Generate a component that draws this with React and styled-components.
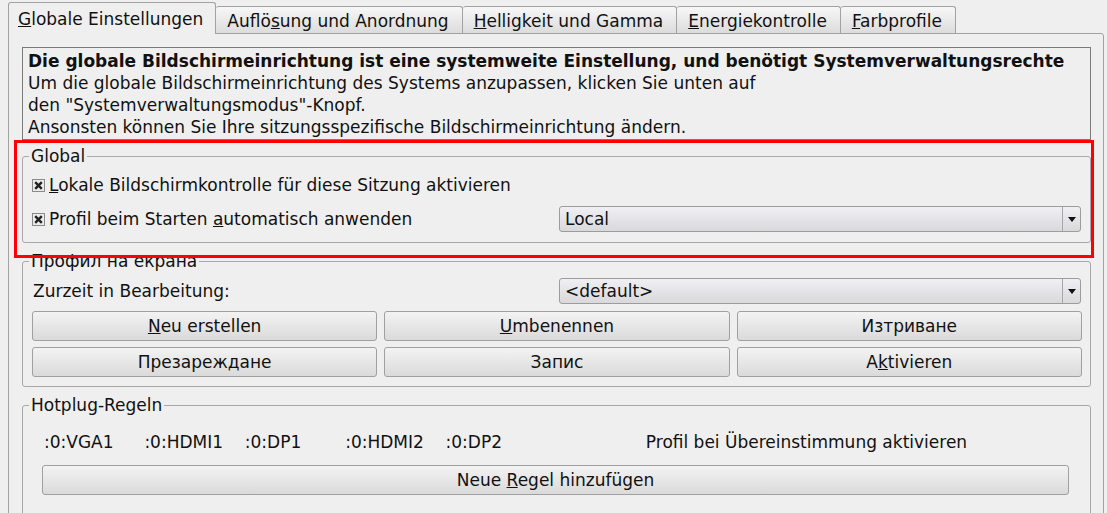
import React from "react"
import styled, { createGlobalStyle } from "styled-components"

const GlobalStyle = createGlobalStyle`
	html, body {
		margin: 0;
		height: 100%;
		overflow: hidden;
		background: #efefef;
	}
	body {
		font-family: "DejaVu Sans", "Noto Sans", sans-serif;
		font-size: 17px;
		color: #111;
	}
`

const tabs = [
	{ label: "Globale Einstellungen", key: 0 },
	{ label: "Auflösung und Anordnung", key: 5 },
	{ label: "Helligkeit und Gamma", key: 0 },
	{ label: "Energiekontrolle", key: 0 },
	{ label: "Farbprofile", key: 0 },
]

const outputs = [":0:VGA1", ":0:HDMI1", ":0:DP1", ":0:HDMI2", ":0:DP2"]

// underline the mnemonic character like a Qt label does
const Mnemonic = ({ text, at }) => {
	if (at === undefined) return <span>{text}</span>
	return (
		<span>
			{text.slice(0, at)}
			<u>{text[at]}</u>
			{text.slice(at + 1)}
		</span>
	)
}

const CheckBox = () => (
	<svg width="13" height="13" viewBox="0 0 13 13">
		<rect x="0.5" y="0.5" width="12" height="12" fill="#ececec" stroke="#8a8a8a" />
		<path d="M3.2 3.2 L9.8 9.8 M9.8 3.2 L3.2 9.8" stroke="#222" strokeWidth="2.4" />
	</svg>
)

const Combo = ({ value }) => (
	<ComboBox>
		<ComboText>{value}</ComboText>
		<ComboArrow>
			<svg width="8" height="5" viewBox="0 0 8 5">
				<path d="M0 0 H8 L4 5 Z" fill="#111" />
			</svg>
		</ComboArrow>
	</ComboBox>
)

const App = () => {
	return (
		<Window>
			<GlobalStyle />
			<TabBar>
				{tabs.map((t, i) => (
					<Tab key={t.label} $active={i === 0}>
						<Mnemonic text={t.label} at={t.key} />
					</Tab>
				))}
			</TabBar>
			<Panel>
				<InfoBox>
					<strong>
						Die globale Bildschirmeinrichtung ist eine systemweite Einstellung, und benötigt
						Systemverwaltungsrechte
					</strong>
					<div>Um die globale Bildschirmeinrichtung des Systems anzupassen, klicken Sie unten auf</div>
					<div>den "Systemverwaltungsmodus"-Knopf.</div>
					<div>Ansonsten können Sie Ihre sitzungsspezifische Bildschirmeinrichtung ändern.</div>
				</InfoBox>

				<Group $top={7} $bottom={10}>
					<Legend>Global</Legend>
					<Row>
						<Check>
							<CheckBox />
							<Mnemonic text="Lokale Bildschirmkontrolle für diese Sitzung aktivieren" at={0} />
						</Check>
					</Row>
					<Row $gap={8}>
						<Check>
							<CheckBox />
							<Mnemonic text="Profil beim Starten automatisch anwenden" at={20} />
						</Check>
						<Combo value="Local" />
					</Row>
				</Group>

				<Group $top={8} $bottom={9} $offset={1}>
					<Legend>Профил на екрана</Legend>
					<Row>
						<Plain>Zurzeit in Bearbeitung:</Plain>
						<Combo value="<default>" />
					</Row>
					<ButtonGrid>
						<Button><Mnemonic text="Neu erstellen" at={0} /></Button>
						<Button><Mnemonic text="Umbenennen" at={0} /></Button>
						<Button><Mnemonic text="Изтриване" /></Button>
						<Button><Mnemonic text="Презареждане" /></Button>
						<Button><Mnemonic text="Запис" /></Button>
						<Button><Mnemonic text="Aktivieren" at={1} /></Button>
					</ButtonGrid>
				</Group>

				<Group $top={18} $bottom={40} $offset={1}>
					<Legend>Hotplug-Regeln</Legend>
					<HotplugBody>
						<OutputGrid>
							{outputs.map((o) => (
								<OutputName key={o}>{o}</OutputName>
							))}
							<MatchLabel>Profil bei Übereinstimmung aktivieren</MatchLabel>
						</OutputGrid>
						<Button>
							<Mnemonic text="Neue Regel hinzufügen" at={5} />
						</Button>
					</HotplugBody>
				</Group>

				<Highlight />
			</Panel>
		</Window>
	)
}

const Window = styled.div`
	padding: 2px 3px 0 8px;
	height: 100vh;
	box-sizing: border-box;
	display: flex;
	flex-direction: column;
`

const TabBar = styled.div`
	display: flex;
	align-items: flex-end;
	height: 31px;
`

const Tab = styled.div`
	position: relative;
	z-index: 2;
	box-sizing: border-box;
	display: flex;
	align-items: center;
	padding: 0 ${(p) => (p.$active ? "12px" : "13px")} 0 ${(p) => (p.$active ? "9px" : "11px")};
	height: ${(p) => (p.$active ? "32px" : "27px")};
	margin-bottom: ${(p) => (p.$active ? "-1px" : "0")};
	padding-top: ${(p) => (p.$active ? "0" : "1px")};
	border: 1px solid #a2a2a2;
	border-bottom: none;
	border-left: ${(p) => (p.$active ? "1px solid #a2a2a2" : "none")};
	border-radius: 3px 3px 0 0;
	background: ${(p) => (p.$active ? "#efefef" : "linear-gradient(#f7f7f7, #dcdcdc)")};
	white-space: nowrap;
`

const Panel = styled.div`
	position: relative;
	flex: 1;
	display: flex;
	flex-direction: column;
	gap: 8px;
	padding: 13px 12px 0 13px;
	border: 1px solid #a2a2a2;
	border-radius: 0 3px 0 0;
	background: #efefef;
	min-height: 520px;
`

const InfoBox = styled.div`
	border: 1px solid #7a7a7a;
	padding: 2px 5px 1px;
	line-height: 22px;
	margin-bottom: -1px;

	strong {
		display: block;
		font-weight: bold;
	}
`

const Group = styled.fieldset`
	margin: ${(p) => p.$offset || 0}px 0 0;
	min-width: 0;
	padding: ${(p) => p.$top}px 9px ${(p) => p.$bottom}px;
	border: 1px solid #a8a8a8;
	border-radius: 3px;
	display: flex;
	flex-direction: column;
`

const Legend = styled.legend`
	padding: 0 2px;
	margin-left: -3px;
	line-height: 18px;
`

const Row = styled.div`
	display: flex;
	align-items: center;
	justify-content: space-between;
	height: 26px;
	margin-top: ${(p) => p.$gap || 0}px;
`

const Check = styled.label`
	display: flex;
	align-items: center;
	gap: 4px;

	svg {
		flex: none;
		margin-top: 1px;
	}
`

const Plain = styled.span`
	padding-left: 1px;
`

const ComboBox = styled.div`
	box-sizing: border-box;
	width: 522px;
	height: 26px;
	display: flex;
	border: 1px solid #9c9c9c;
	border-radius: 3px;
	background: linear-gradient(#f0f0f4, #d9d9dc);
`

const ComboText = styled.div`
	flex: 1;
	display: flex;
	align-items: center;
	padding-left: 5px;
`

const ComboArrow = styled.div`
	width: 17px;
	display: flex;
	align-items: center;
	justify-content: center;
	border-left: 1px solid #a8a8a8;
`

const ButtonGrid = styled.div`
	display: grid;
	grid-template-columns: repeat(3, 1fr);
	column-gap: 7px;
	row-gap: 6px;
	margin-top: 7px;
	margin-right: -1px;
`

const Button = styled.div`
	box-sizing: border-box;
	height: 30px;
	display: flex;
	align-items: center;
	justify-content: center;
	border: 1px solid #a0a0a0;
	border-radius: 3px;
	background: linear-gradient(#f3f3f3, #dadada);
`

const HotplugBody = styled.div`
	display: flex;
	flex-direction: column;
	gap: 13px;
	margin: 0 12px 0 10px;
`

const OutputGrid = styled.div`
	display: grid;
	grid-template-columns: repeat(5, 100.4px) 1fr;
	line-height: 20px;
`

const OutputName = styled.span`
	padding-left: 2px;
`

const MatchLabel = styled.span`
	text-align: center;
`

const Highlight = styled.div`
	position: absolute;
	left: 5px;
	top: 106px;
	width: 1080px;
	height: 118px;
	box-sizing: border-box;
	border: 3px solid #ff0000;
	pointer-events: none;
`

export default App
